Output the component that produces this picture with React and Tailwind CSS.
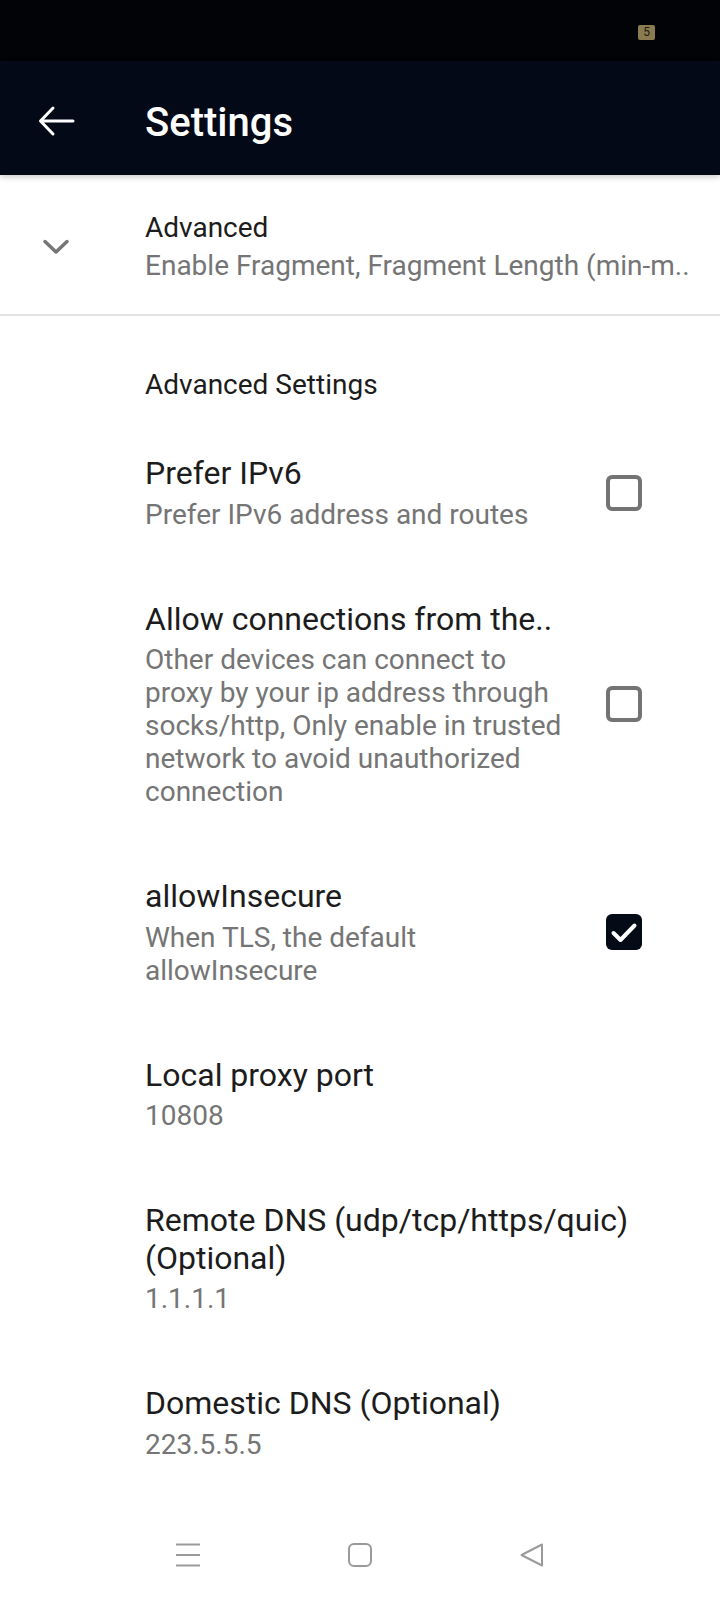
import React from "react";

function BackArrow() {
  return (
    <svg width="48" height="48" viewBox="0 0 48 48" fill="none">
      <path d="M41 24H9M21 11L8.5 24L21 37" stroke="#ffffff" strokeWidth="3" strokeLinecap="round" strokeLinejoin="round" />
    </svg>
  );
}

function Chevron() {
  return (
    <svg width="48" height="48" viewBox="0 0 48 48" fill="none">
      <path d="M13 18.5L24 29L35 18.5" stroke="#767676" strokeWidth="3.5" strokeLinecap="round" strokeLinejoin="round" />
    </svg>
  );
}

function CheckBox({ checked }) {
  if (checked) {
    return (
      <div className="w-[36px] h-[36px] rounded-[6px] bg-[#050a17] flex items-center justify-center">
        <svg width="36" height="36" viewBox="0 0 36 36" fill="none">
          <path d="M7.5 19L14.5 26L28.5 11.5" stroke="#ffffff" strokeWidth="4" strokeLinecap="round" strokeLinejoin="round" />
        </svg>
      </div>
    );
  }
  return <div className="w-[36px] h-[36px] rounded-[6px] border-[4px] border-[#747474]" />;
}

function Row({ title, lines, checkbox }) {
  return (
    <div className="flex items-center py-[35px] pl-[145px]">
      <div className="flex-1 flex flex-col">
        {title.map((t) => (
          <div key={t} className="text-[32px] leading-[37.5px] text-[#1c1c1c] whitespace-nowrap">
            {t}
          </div>
        ))}
        <div className="mt-[5px] flex flex-col">
          {lines.map((l) => (
            <div key={l} className="text-[28px] leading-[33px] text-[#757575] whitespace-nowrap">
              {l}
            </div>
          ))}
        </div>
      </div>
      {checkbox !== undefined && (
        <div className="mr-[78px] ml-[20px]">
          <CheckBox checked={checkbox} />
        </div>
      )}
    </div>
  );
}

export default function App() {
  return (
    <div className="w-[720px] h-[1600px] bg-white flex flex-col overflow-hidden font-['Roboto',sans-serif]">
      {/* status bar */}
      <div className="h-[61px] bg-[#020307] flex items-center justify-end pr-[65px] shrink-0">
        <div className="w-[17px] h-[15px] mt-[3px] rounded-[2px] bg-[#8a7c50] flex items-center justify-center text-[12px] leading-none text-[#1b1b14]">
          5
        </div>
      </div>

      {/* toolbar */}
      <header className="relative z-10 h-[114px] bg-[#040917] flex items-center shrink-0 shadow-[0_2px_6px_rgba(0,0,0,0.22)]">
        <div className="ml-[32px] mt-[6px] w-[48px] h-[48px]">
          <BackArrow />
        </div>
        <h1 className="ml-[65px] mt-[10px] text-[40px] font-medium text-white leading-none">Settings</h1>
      </header>

      {/* collapsed group */}
      <div className="flex items-center pt-[36px] pb-[32px] border-b-2 border-[#e2e2e2]">
        <div className="ml-[32px] w-[48px] h-[48px]">
          <Chevron />
        </div>
        <div className="ml-[65px] flex flex-col">
          <div className="text-[28px] leading-[33px] text-[#1c1c1c]">Advanced</div>
          <div className="mt-[5px] text-[28px] leading-[33px] text-[#757575] whitespace-nowrap">
            Enable Fragment, Fragment Length (min-m..
          </div>
        </div>
      </div>

      {/* category */}
      <div className="pl-[145px] pt-[52px] pb-[19px] text-[28px] leading-[33px] text-[#1c1c1c]">
        Advanced Settings
      </div>

      <Row title={["Prefer IPv6"]} lines={["Prefer IPv6 address and routes"]} checkbox={false} />
      <Row
        title={["Allow connections from the.."]}
        lines={[
          "Other devices can connect to",
          "proxy by your ip address through",
          "socks/http, Only enable in trusted",
          "network to avoid unauthorized",
          "connection",
        ]}
        checkbox={false}
      />
      <Row title={["allowInsecure"]} lines={["When TLS, the default", "allowInsecure"]} checkbox={true} />
      <Row title={["Local proxy port"]} lines={["10808"]} />
      <Row title={["Remote DNS (udp/tcp/https/quic)", "(Optional)"]} lines={["1.1.1.1"]} />
      <Row title={["Domestic DNS (Optional)"]} lines={["223.5.5.5"]} />

      <div className="flex-1" />

      {/* navigation bar */}
      <nav className="h-[90px] flex items-center justify-center gap-[148px] shrink-0">
        <svg width="24" height="24" viewBox="0 0 24 24" fill="none">
          <path d="M0 1.5H24M0 12H24M0 22.5H24" stroke="#9a9a9a" strokeWidth="2" />
        </svg>
        <svg width="24" height="24" viewBox="0 0 24 24" fill="none">
          <rect x="1" y="1" width="22" height="22" rx="5" stroke="#9a9a9a" strokeWidth="2" />
        </svg>
        <svg width="24" height="24" viewBox="0 0 24 24" fill="none">
          <path d="M22 1.5V22.5L1.5 12Z" stroke="#9a9a9a" strokeWidth="2" strokeLinejoin="round" />
        </svg>
      </nav>
    </div>
  );
}
